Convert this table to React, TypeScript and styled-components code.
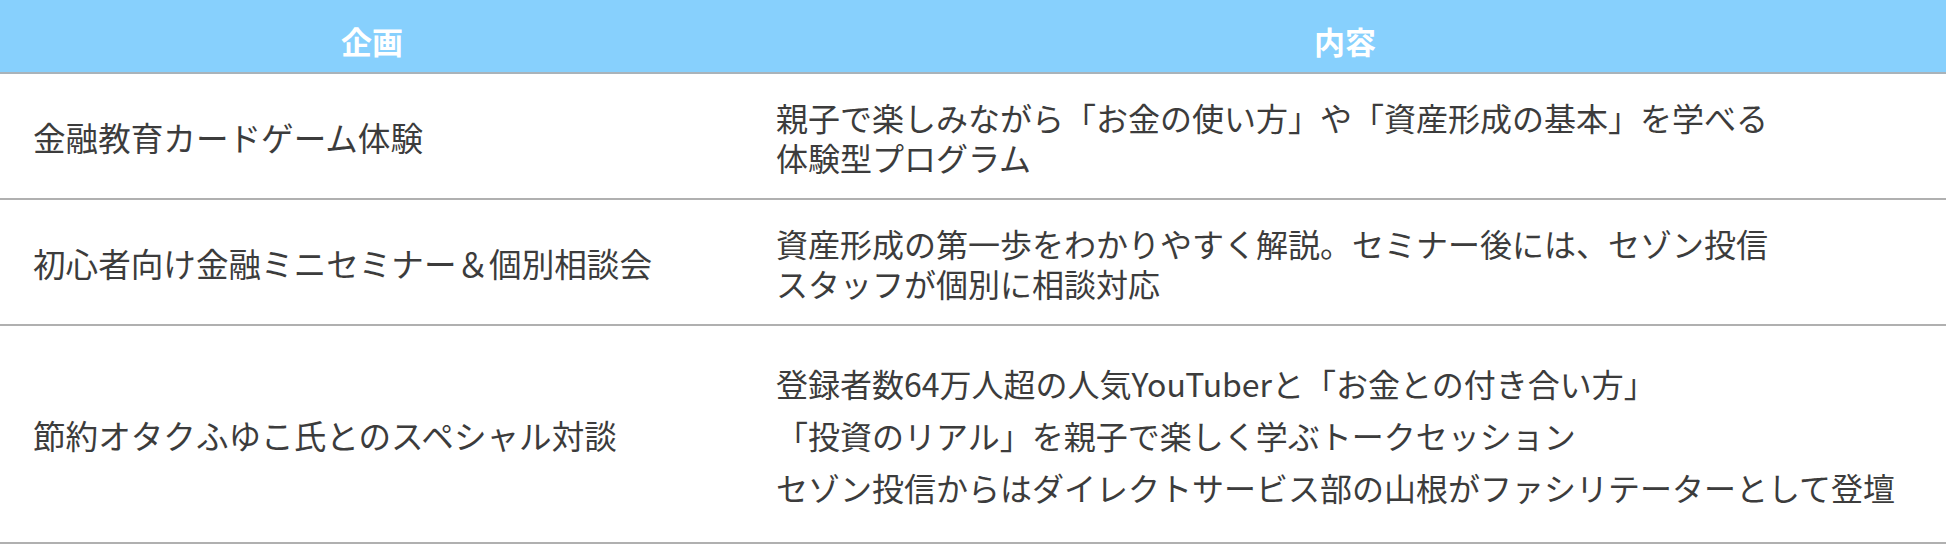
import React from "react";
import styled, { createGlobalStyle } from "styled-components";

const GlobalStyle = createGlobalStyle`
  html, body {
    margin: 0;
    padding: 0;
    background: #ffffff;
  }
  body {
    font-family: "Noto Sans CJK JP", "Noto Sans", sans-serif;
    color: #3c3c3c;
  }
`;

const Table = styled.div`
  width: 1946px;
  display: grid;
  grid-template-columns: 744px 1fr;
`;

const HeadCell = styled.div`
  box-sizing: border-box;
  height: 74px;
  background: #87d0fd;
  border-bottom: 2px solid #a9b3ba;
  color: #ffffff;
  font-size: 31px;
  font-weight: 700;
  display: flex;
  align-items: center;
  justify-content: center;
  padding-top: 8px;
`;

const Cell = styled.div<{ $h: number }>`
  box-sizing: border-box;
  height: ${(p) => p.$h}px;
  border-bottom: 2px solid #b0b0b0;
  display: flex;
  flex-direction: column;
  justify-content: center;
  padding: 2px 0 0 33px;
  font-size: 32.6px;
  line-height: 40px;
  white-space: nowrap;
  color: #3c3c3c;
`;

const DetailCell = styled(Cell)`
  padding-left: 32px;
  font-size: 32px;
`;

const Line = styled.div<{ $lh?: number }>`
  line-height: ${(p) => p.$lh ?? 40}px;
`;

type Row = { title: string; lines: string[]; h: number; lh?: number };

const rows: Row[] = [
  {
    title: "金融教育カードゲーム体験",
    lines: [
      "親子で楽しみながら「お金の使い方」や「資産形成の基本」を学べる",
      "体験型プログラム",
    ],
    h: 126,
  },
  {
    title: "初心者向け金融ミニセミナー＆個別相談会",
    lines: [
      "資産形成の第一歩をわかりやすく解説。セミナー後には、セゾン投信",
      "スタッフが個別に相談対応",
    ],
    h: 126,
  },
  {
    title: "節約オタクふゆこ氏とのスペシャル対談",
    lines: [
      "登録者数64万人超の人気YouTuberと「お金との付き合い方」",
      "「投資のリアル」を親子で楽しく学ぶトークセッション",
      "セゾン投信からはダイレクトサービス部の山根がファシリテーターとして登壇",
    ],
    h: 218,
    lh: 52,
  },
];

export default function App() {
  return (
    <>
      <GlobalStyle />
      <Table>
        <HeadCell>企画</HeadCell>
        <HeadCell>内容</HeadCell>
        {rows.map((r) => (
          <React.Fragment key={r.title}>
            <Cell $h={r.h}>{r.title}</Cell>
            <DetailCell $h={r.h}>
              {r.lines.map((l) => (
                <Line key={l} $lh={r.lh}>
                  {l}
                </Line>
              ))}
            </DetailCell>
          </React.Fragment>
        ))}
      </Table>
    </>
  );
}
